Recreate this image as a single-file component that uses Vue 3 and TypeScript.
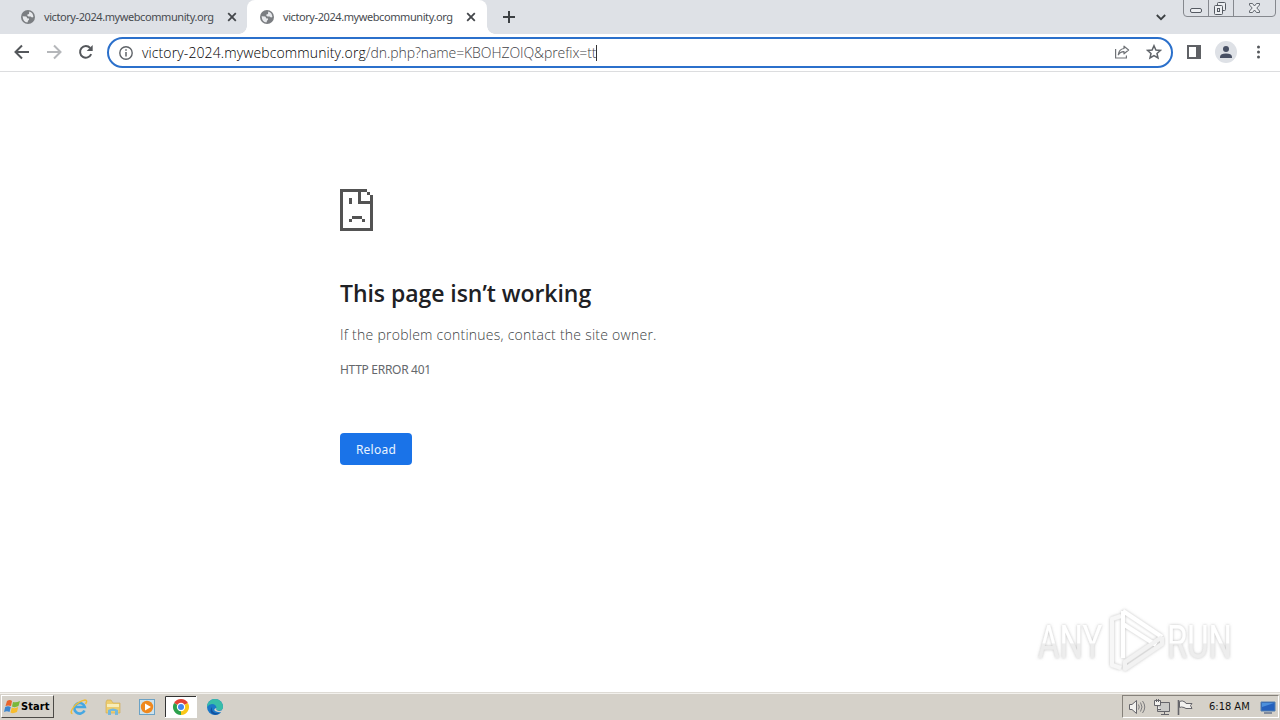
<script setup lang="ts">
interface Tab { title: string; active: boolean }
const tabs: Tab[] = [
  { title: 'victory-2024.mywebcommunity.org', active: false },
  { title: 'victory-2024.mywebcommunity.org', active: true },
]
</script>

<template>
  <div class="screen">
    <header class="strip">
      <div v-for="(tab, i) in tabs" :key="i" class="tab" :class="{ active: tab.active }">
        <svg class="globe" width="14" height="14" viewBox="0 0 14 14">
          <circle cx="7" cy="7" r="7" fill="#7b7e82" />
          <path d="M1.6 6.2 L5.2 6.6 Q6.2 7.2 6 8.2 L8 8.4 Q8.4 9.8 7.2 10.4 L6.4 12.4 Q2 12 1.6 6.2Z M8.2 1.6 Q12 2.6 12.4 7 Q10.6 8 9.6 6.6 L7.4 6.4 Q5.6 5.6 6.4 4.4 L8 4 Z" fill="#e7e9ec" />
        </svg>
        <span class="tab-title">{{ tab.title }}</span>
        <svg class="close" width="10" height="10" viewBox="0 0 10 10"><path d="M1.2 1.2 L8.8 8.8 M8.8 1.2 L1.2 8.8" stroke="#43464a" stroke-width="1.8" /></svg>
      </div>
      <svg class="plus" width="12" height="12" viewBox="0 0 12 12"><path d="M6 0V12M0 6H12" stroke="#3c4043" stroke-width="2" /></svg>
      <svg class="chevron" width="10" height="7" viewBox="0 0 10 7"><path d="M.8 1 L5 5.2 L9.2 1" fill="none" stroke="#3c4043" stroke-width="1.8" /></svg>
      <svg class="window-controls" width="94" height="18" viewBox="0 0 94 18">
        <path d="M.5 0V13Q.5 16.5 4 16.5H89Q92.500 16.500 92.500 13V0M25.500 0V16M50.500 0V16" fill="none" stroke="#85888e" />
        <g fill="#eceef1" stroke="#555a62">
          <rect x="7.500" y="8.500" width="11" height="4" rx="1.500" />
          <rect x="34.500" y="2.500" width="8" height="8" rx="1" />
          <rect x="31.500" y="5.500" width="8" height="9" rx="1" />
          <rect x="34.500" y="8.500" width="2" height="3" />
          <path d="M66.500 3.500H69.500L71.500 6L73.500 3.500H76.500V5L73.800 8L76.500 11V12.500H73.500L71.500 10L69.500 12.500H66.500V11L69.200 8L66.500 5Z" stroke-width=".9" />
        </g>
      </svg>
    </header>

    <nav class="toolbar">
      <svg class="nav-icons" width="96" height="36" viewBox="0 0 96 36" fill="none" stroke-width="2">
        <path d="M29 18H16M22 11.500L15.500 18L22 24.500" stroke="#54575b" />
        <path d="M47 18H60M54 11.500L60.500 18L54 24.500" stroke="#b5b7ba" />
        <path d="M91.200 20.200A5.800 5.800 0 1 1 90.200 14" stroke="#54575b" />
        <path d="M92.700 11V17H86.700Z" fill="#54575b" />
      </svg>
      <div class="omnibox">
        <svg class="info" width="14" height="14" viewBox="0 0 14 14"><circle cx="7" cy="7" r="6.200" fill="none" stroke="#5f6368" stroke-width="1.400" /><path d="M7 6V10.500M7 3.300V4.800" stroke="#5f6368" stroke-width="1.500" /></svg>
        <span class="url"><span class="host">victory-2024.mywebcommunity.org</span><span class="path">/dn.php?name=KBOHZOIQ&amp;prefix=tt</span></span>
        <i class="caret"></i>
        <svg class="share" width="16" height="16" viewBox="0 0 16 16" fill="none" stroke="#707377" stroke-width="1.200"><path d="M1.600 5V14H12.400V11.500" /><path d="M10 2.200L14.600 6L10 9.800V7.600Q6.300 7.400 4.300 10.800Q4.900 5.200 10 4.500Z" stroke-linejoin="round" /></svg>
        <svg class="star" width="16" height="16" viewBox="0 0 16 16"><path d="M8 1.700L9.900 6L14.500 6.400L11 9.500L12 14L8 11.600L4 14L5 9.500L1.500 6.400L6.100 6Z" fill="none" stroke="#5f6368" stroke-width="1.500" /></svg>
      </div>
      <svg class="right-icons" width="94" height="36" viewBox="0 0 94 36">
        <path d="M0 11H14V25H0ZM2 13V23H9V13Z" fill="#5f6165" fill-rule="evenodd" />
        <circle cx="39" cy="18" r="11" fill="#dee1e6" />
        <circle cx="39" cy="15" r="3" fill="#485064" />
        <path d="M33 24V22.500Q33.500 19.500 39 19.500Q44.500 19.500 45 22.500V24Z" fill="#485064" />
        <g fill="#54575b"><circle cx="71.500" cy="13" r="1.500" /><circle cx="71.500" cy="18" r="1.500" /><circle cx="71.500" cy="23" r="1.500" /></g>
      </svg>
    </nav>

    <main class="page">
      <svg class="sad" width="33" height="42" viewBox="0 0 33 42" fill="#535353" shape-rendering="crispEdges">
        <path d="M0 0H27V3H21V12H30V9H33V42H0ZM3 3V39H30V15H18V3Z" fill-rule="evenodd" />
        <path d="M27 3H30V6H27ZM30 6H33V12H30ZM9 9H12V15H9ZM12 27H22V30H12ZM9 30H12V33H9ZM22 30H25V33H22Z" />
      </svg>
      <h1><span>This page isn’t working</span></h1>
      <p class="message"><span>If the problem continues, contact the site owner.</span></p>
      <p class="code"><span>HTTP ERROR 401</span></p>
      <button class="reload"><span>Reload</span></button>
      <svg class="watermark" width="210" height="72" viewBox="0 0 210 72">
        <defs>
          <linearGradient id="fade" x1="0" y1="0" x2="0" y2="1"><stop offset=".52" stop-color="#fff" /><stop offset=".54" stop-color="#ededed" /></linearGradient>
          <filter id="glow" x="-10%" y="-15%" width="120%" height="130%"><feDropShadow dx="0" dy="0" stdDeviation="1.800" flood-color="#888" flood-opacity=".55" /></filter>
        </defs>
        <g filter="url(#glow)">
          <g font-family="Roboto" font-size="47" font-weight="400" fill="url(#fade)">
            <text transform="translate(8 52) scale(.7 1)">ANY</text>
            <text transform="translate(137 52) scale(.7 1)">RUN</text>
          </g>
          <g fill="none" stroke="#fff" stroke-width="4" stroke-linejoin="round">
            <path d="M91 10L82 13V59L91 62" stroke="#f7f7f7" />
            <path d="M93 5V52M93 5L132 31M93 18L126 39" />
            <path d="M132 31V38L95 63V56L132 31" stroke="#f2f2f2" />
          </g>
        </g>
      </svg>
    </main>

    <footer class="taskbar">
      <button class="start">
        <svg width="17" height="16" viewBox="0 0 17 16"><path d="M3 2Q6 0 8 2L7 7Q4 6 1.500 7Z" fill="#e8642c" /><path d="M9 3Q12 4 16 2L14.500 7Q11 9 8 7.500Z" fill="#7ab83b" /><path d="M1.200 8Q4 6.500 6.800 8L5.500 13Q3 11.500 0 13Z" fill="#3c86cf" /><path d="M7.800 8.500Q11 10 14.200 8L13 13Q9 15 6.500 13.500Z" fill="#f7bd2e" /></svg>
        <span>Start</span>
      </button>
      <svg class="quick" width="160" height="25" viewBox="0 0 160 25">
        <g fill="none"><path d="M16.500 15.500A5.300 5.300 0 1 1 16.800 12H7" stroke="#45a7e2" stroke-width="2.600" /><path d="M4.500 18.500C0 18 8 6.500 17 5Q20 5 17.500 9" stroke="#efbd39" stroke-width="1.500" /></g>
        <path d="M38 7V18H52V8H45L43 5H39Z" fill="#edcd6f" stroke="#d1aa49" stroke-width=".6" /><path d="M39 9H51V12H39Z" fill="#f8edb9" /><path d="M40 20V15Q45 12 50 15V20H47V16H43V20Z" fill="#74b8dd" />
        <rect x="71.500" y="4.500" width="15" height="15" fill="#cde2ed" stroke="#6ba2c5" /><circle cx="79" cy="12" r="6.200" fill="#ef881e" /><path d="M77 8.500L83 12L77 15.500Z" fill="#fff" />
        <rect x="97" y="1" width="32" height="22" fill="#fff" /><path d="M97.500 22V1.500H128" fill="none" stroke="#333" />
        <g transform="translate(113 12)"><path d="M0 0L-6.930-4A8 8 0 0 1 6.930-4Z" fill="#e44335" /><path d="M0 0L-6.930-4A8 8 0 0 0 0 8L4 1Z" fill="#2da14c" /><path d="M0 0L6.930-4A8 8 0 0 1 0 8Z" fill="#fac717" /><circle r="4.200" fill="#fff" /><circle r="3" fill="#4287ef" /></g>
        <g transform="translate(147 12)"><circle r="8" fill="#1b78c8" /><path d="M-8 0A8 8 0 0 1 8 0Q8 3.500 4 3.500Q0 3 1.500 1Q1-3-3-3Q-6-3-8 0" fill="#38bda8" /><path d="M-3 0Q-4 7 5 6.200Q1 9-3 6.500Q-6 4-3 0" fill="#12519f" /><path d="M1.500 1Q0 3 4 4Q7 4 8 1.500L8.500 5Q4 6 0 4Q-2 2 1.500 1" fill="#d5d1c9" /></g>
      </svg>
      <div class="tray">
        <svg width="70" height="20" viewBox="0 0 70 20" fill="#f2f1ee" stroke="#65656a">
          <path d="M6.500 7.500H9L13.500 3.500V16.500L9 12.500H6.500Z" /><path d="M15.500 7.500Q17 10 15.500 12.500M17.500 5.500Q20.500 10 17.500 14.500M19.500 4Q24 10 19.500 16" fill="none" stroke-width=".8" />
          <path d="M36.500 5.500H46.500V14.500H34.500V10M38 17.500H46M41.500 15V17" fill="#c9c9c7" /><path d="M31.500 3.500H37.500V8.500H31.500ZM33.500 2V5M35.500 2V5M34.500 9V12.500H38" />
          <path d="M55.500 3V18" stroke-width="1.600" /><path d="M56.500 4.500Q59 3 62 5L63 6.500H69L67.500 8.500L69 11.500H63L61 10.500Q58 9.500 56.500 10.500Z" />
        </svg>
        <span class="clock">6:18 AM</span>
        <svg class="desktop" width="16" height="16" viewBox="0 0 16 16"><path d="M1 3H15V12H1Z" fill="#2561bd" stroke="#537eae" /><path d="M2 4H14L2 8Z" fill="#4c90dc" /><path d="M4 14H12" stroke="#66758e" stroke-width="1.500" /></svg>
      </div>
    </footer>
  </div>
</template>

<style>
body { margin: 0; overflow: hidden; }
</style>

<style scoped>
* { box-sizing: border-box; }
svg { display: block; flex: none; }
span { white-space: nowrap; }
.screen { width: 1280px; height: 720px; display: flex; flex-direction: column; background: #fff; font-family: "Open Sans", "Noto Sans", sans-serif; }
.strip { height: 34px; display: flex; background: #dee1e6; align-items: center; }
.tab { width: 240px; height: 34px; display: flex; align-items: center; padding-left: 14px; color: #484b50; position: relative; }
.tab:first-child { width: 247px; padding-left: 21px; }
.tab.active { background: #fff; border-radius: 8px 8px 0 0; padding-left: 13px; }
.tab.active::before, .tab.active::after { content: ""; position: absolute; bottom: 0; width: 8px; height: 8px; }
.tab.active::before { left: -8px; background: radial-gradient(circle at 0 0, transparent 7.500px, #fff 8px); }
.tab.active::after { right: -8px; background: radial-gradient(circle at 100% 0, transparent 7.500px, #fff 8px); }
.tab-title { width: 171px; margin-left: 9px; font-family: "Noto Sans", sans-serif; font-size: 11px; line-height: 16px; letter-spacing: -.42px; }
.close { margin-left: 12px; }
.plus { margin-left: 16px; }
.chevron { margin-left: auto; }
.window-controls { margin-left: 17px; margin-right: 3px; align-self: flex-start; }
.toolbar { height: 38px; display: flex; border-bottom: 1px solid #dcdddf; }
.nav-icons { margin-right: 11px; }
.omnibox { width: 1066px; height: 31px; margin-top: 3px; border: 2px solid #2b70cb; border-radius: 16px; display: flex; align-items: center; padding-left: 10px; }
.url { margin-left: 9px; font-size: 14px; font-weight: 300; line-height: 20px; display: flex; width: 454px; }
.host { color: #000; letter-spacing: .11px; }
.path { color: #3f4246; letter-spacing: -.08px; }
.caret { width: 1px; height: 16px; background: #333; }
.share { margin-left: auto; }
.star { margin-left: 16px; margin-right: 9px; }
.share, .star { margin-bottom: 1px; }
.right-icons { margin-left: 14px; margin-right: -1px; }
.page { flex: 1; min-height: 0; position: relative; padding: 117px 0 0 340px; display: flex; flex-direction: column; align-items: flex-start; }
h1 { margin: 46px 0 0; font-size: 23px; font-weight: 600; line-height: 32px; letter-spacing: -.05px; color: #202124; }
.message { margin: 16px 0 0; font-size: 14px; font-weight: 300; line-height: 20px; letter-spacing: .25px; color: #3c3f43; }
.code { margin: 16px 0 0; font-size: 12px; line-height: 18px; color: #65686c; font-family: "Noto Sans", sans-serif; letter-spacing: -.3px; }
.reload { margin-top: 54px; width: 72px; height: 32px; border: 0; border-radius: 4px; padding: 0; background: #1a73e8; color: #e9f3ff; font-family: "Noto Sans", sans-serif; font-size: 12px; letter-spacing: .25px; }
.watermark { position: absolute; left: 1030px; top: 534px; }
.taskbar { height: 28px; background: #d5d1c9; border-top: 1px solid #dedbd5; box-shadow: inset 0 1px #f3f1ed; display: flex; align-items: flex-start; padding: 2px 2px 0 1px; }
.start { width: 53px; height: 23px; border: 1px solid; border-color: #fff #4c4a46 #4c4a46 #fff; background: #d5d1c9; padding: 0 1px 0 2px; display: flex; align-items: center; color: #000; font: bold 11px/20px "DejaVu Sans Condensed", "DejaVu Sans", sans-serif; }
.start span { letter-spacing: .1px; padding-top: 1px; }
.quick { margin-left: 14px; }
.tray { margin-left: auto; margin-right: -1px; width: 157px; height: 23px; border: 1px solid; border-color: #85817a #fff #fff #85817a; display: flex; align-items: center; }
.clock { margin-left: 16px; padding-top: 1px; width: 42px; font: 11px/18px "DejaVu Sans Condensed", "DejaVu Sans", sans-serif; color: #111; }
.desktop { margin-left: 9px; }
</style>
